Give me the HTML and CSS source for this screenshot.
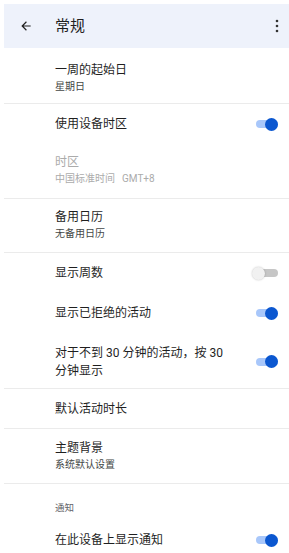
FILE: index.html
```html
<!DOCTYPE html>
<html lang="zh-CN">
<head>
<meta charset="utf-8">
<link rel="stylesheet" href="styles.css">
</head>
<body>
<div class="page">
  <header class="appbar">
    <svg class="back" viewBox="0 0 24 24" width="14" height="14"><path d="M20 11H7.83l5.59-5.59L12 4l-8 8 8 8 1.41-1.41L7.83 13H20v-2z" fill="#1f1f1f"/></svg>
    <div class="apptitle">常规</div>
    <svg class="more" viewBox="0 0 4 14" width="4" height="14"><circle cx="2" cy="2" r="1.3" fill="#333"/><circle cx="2" cy="7" r="1.3" fill="#333"/><circle cx="2" cy="12" r="1.3" fill="#333"/></svg>
  </header>

  <div class="row two r-a divided">
    <div class="text"><div class="title">一周的起始日</div><div class="sub">星期日</div></div>
  </div>
  <div class="row single">
    <div class="text"><div class="title">使用设备时区</div></div>
    <span class="switch on"><span class="thumb"></span></span>
  </div>
  <div class="row two r-c divided disabled">
    <div class="text"><div class="title">时区</div><div class="sub">中国标准时间<span class="gmt">GMT+8</span></div></div>
  </div>
  <div class="row two r-d divided">
    <div class="text"><div class="title">备用日历</div><div class="sub">无备用日历</div></div>
  </div>
  <div class="row single">
    <div class="text"><div class="title">显示周数</div></div>
    <span class="switch off"><span class="thumb"></span></span>
  </div>
  <div class="row single">
    <div class="text"><div class="title">显示已拒绝的活动</div></div>
    <span class="switch on"><span class="thumb"></span></span>
  </div>
  <div class="row wrap divided">
    <div class="text"><div class="title multi">对于不到 30 分钟的活动，按 30 分钟显示</div></div>
    <span class="switch on"><span class="thumb"></span></span>
  </div>
  <div class="row single r-h divided">
    <div class="text"><div class="title">默认活动时长</div></div>
  </div>
  <div class="row two r-i divided">
    <div class="text"><div class="title">主题背景</div><div class="sub">系统默认设置</div></div>
  </div>
  <div class="section">通知</div>
  <div class="row single">
    <div class="text"><div class="title">在此设备上显示通知</div></div>
    <span class="switch on"><span class="thumb"></span></span>
  </div>
</div>
</body>
</html>
```

FILE: styles.css
```css
html, body {
  margin: 0;
  padding: 0;
  background: #ffffff;
}
body {
  font-family: Roboto, "Noto Sans CJK SC", sans-serif;
  color: #1f1f1f;
}
.page {
  margin: 4px 0 0 4px;
  overflow: hidden;
}
.appbar {
  height: 44px;
  background: #eef2fb;
  display: flex;
  align-items: center;
}
.back {
  margin-left: 15px;
  flex: none;
}
.apptitle {
  margin-left: 22px;
  font-size: 15px;
  line-height: 20px;
  flex: 1;
  color: #1f1f1f;
}
.more {
  margin-right: 10px;
  flex: none;
}
.row {
  display: flex;
  align-items: center;
  padding-left: 51px;
  padding-right: 11px;
  gap: 25px;
  box-sizing: border-box;
}
.divided {
  border-bottom: 1px solid #ebebeb;
}
.text {
  flex: 1;
  min-width: 0;
}
.title {
  font-size: 12px;
  line-height: 16px;
  color: #1f1f1f;
}
.sub {
  font-size: 10px;
  line-height: 18px;
  color: #444746;
}
.gmt {
  margin-left: 7px;
}
.disabled .title,
.disabled .sub {
  color: #ababab;
}
.single {
  height: 40px;
}
.r-h {
  height: 40px;
}
.two {
  align-items: flex-start;
}
.r-a {
  padding-top: 14px;
  height: 56px;
}
.r-c {
  padding-top: 10px;
  height: 55px;
}
.r-d {
  padding-top: 10px;
  height: 54px;
}
.r-i {
  padding-top: 11px;
  height: 55px;
}
.wrap {
  height: 56px;
  padding-top: 2px;
}
.multi {
  line-height: 18px;
}
.section {
  padding-left: 51px;
  padding-top: 17px;
  height: 36px;
  box-sizing: border-box;
  font-size: 9.5px;
  line-height: 14px;
  color: #5f6368;
}
.switch {
  position: relative;
  flex: none;
  width: 22px;
  height: 8px;
  border-radius: 4px;
}
.switch.on {
  background: #a8c7fa;
}
.switch.off {
  background: #c6c6c6;
}
.thumb {
  position: absolute;
  top: -2.5px;
  width: 13px;
  height: 13px;
  border-radius: 50%;
}
.switch.on .thumb {
  right: 0;
  background: #0b57d0;
}
.switch.off .thumb {
  left: -4px;
  background: #f1f1f1;
  box-shadow: 0 0 2px rgba(0,0,0,0.25);
}
```
